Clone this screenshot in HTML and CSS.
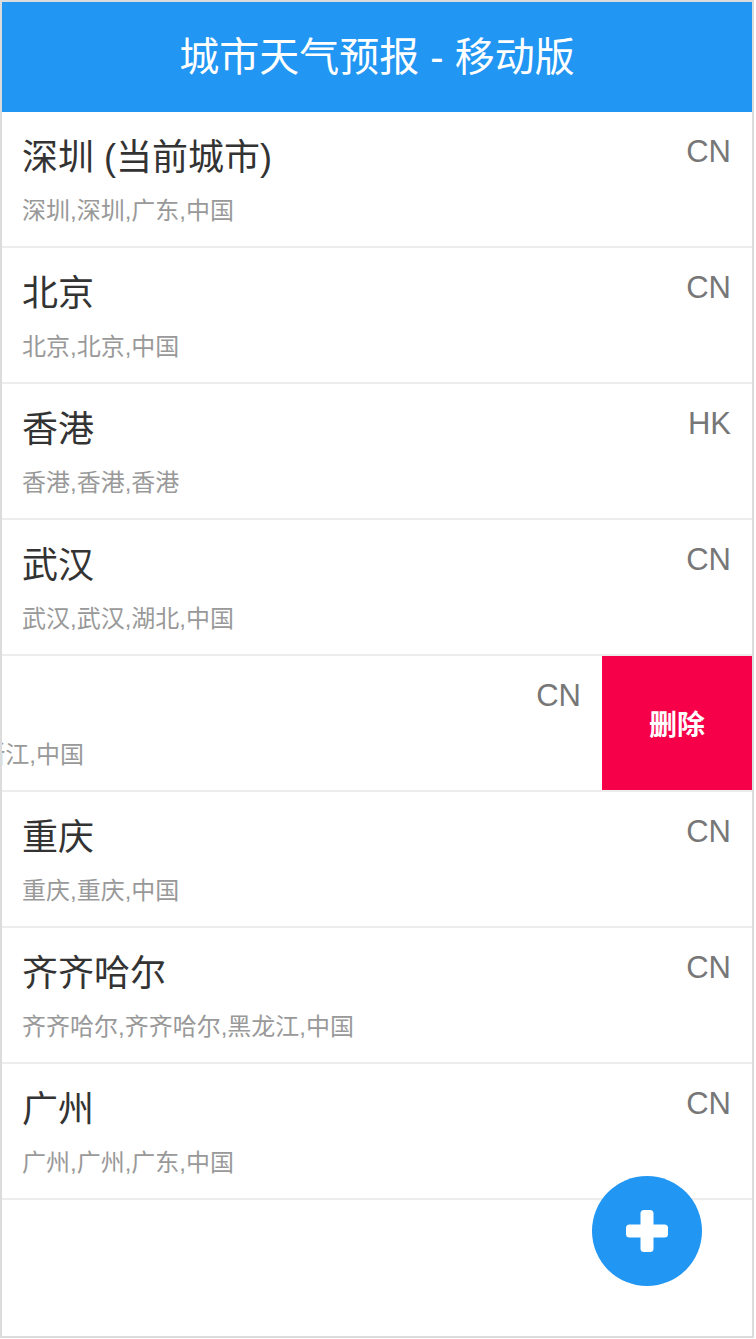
FILE: index.html
```html
<!DOCTYPE html>
<html lang="zh-CN">
<head>
<meta charset="utf-8">
<title>城市天气预报 - 移动版</title>
<link rel="stylesheet" href="styles.css">
</head>
<body>
<div class="phone">
  <header class="app-header">
    <h1 class="app-title">城市天气预报 - 移动版</h1>
  </header>
  <ul class="city-list">
    <li class="city-item">
      <div class="city-track">
        <div class="city-content">
          <div class="city-text">
            <div class="city-name">深圳 (当前城市)</div>
            <div class="city-path">深圳,深圳,广东,中国</div>
          </div>
          <div class="city-code">CN</div>
        </div>
      </div>
    </li>
    <li class="city-item">
      <div class="city-track">
        <div class="city-content">
          <div class="city-text">
            <div class="city-name">北京</div>
            <div class="city-path">北京,北京,中国</div>
          </div>
          <div class="city-code">CN</div>
        </div>
      </div>
    </li>
    <li class="city-item">
      <div class="city-track">
        <div class="city-content">
          <div class="city-text">
            <div class="city-name">香港</div>
            <div class="city-path">香港,香港,香港</div>
          </div>
          <div class="city-code">HK</div>
        </div>
      </div>
    </li>
    <li class="city-item">
      <div class="city-track">
        <div class="city-content">
          <div class="city-text">
            <div class="city-name">武汉</div>
            <div class="city-path">武汉,武汉,湖北,中国</div>
          </div>
          <div class="city-code">CN</div>
        </div>
      </div>
    </li>
    <li class="city-item">
      <div class="city-track is-swiped">
        <div class="city-content">
          <div class="city-text">
            <div class="city-name">杭州</div>
            <div class="city-path">杭州,杭州,浙江,中国</div>
          </div>
          <div class="city-code">CN</div>
        </div>
        <button class="delete-btn" type="button">删除</button>
      </div>
    </li>
    <li class="city-item">
      <div class="city-track">
        <div class="city-content">
          <div class="city-text">
            <div class="city-name">重庆</div>
            <div class="city-path">重庆,重庆,中国</div>
          </div>
          <div class="city-code">CN</div>
        </div>
      </div>
    </li>
    <li class="city-item">
      <div class="city-track">
        <div class="city-content">
          <div class="city-text">
            <div class="city-name">齐齐哈尔</div>
            <div class="city-path">齐齐哈尔,齐齐哈尔,黑龙江,中国</div>
          </div>
          <div class="city-code">CN</div>
        </div>
      </div>
    </li>
    <li class="city-item">
      <div class="city-track">
        <div class="city-content">
          <div class="city-text">
            <div class="city-name">广州</div>
            <div class="city-path">广州,广州,广东,中国</div>
          </div>
          <div class="city-code">CN</div>
        </div>
      </div>
    </li>
  </ul>
  <button class="fab" type="button" aria-label="添加城市">
    <svg width="44" height="44" viewBox="0 0 44 44" aria-hidden="true">
      <rect x="15.5" y="1" width="13" height="42" rx="3.5" fill="#fff"/>
      <rect x="1" y="15.5" width="42" height="13" rx="3.5" fill="#fff"/>
    </svg>
  </button>
</div>
</body>
</html>
```

FILE: styles.css
```css
* {
  box-sizing: border-box;
}

html, body {
  margin: 0;
  padding: 0;
  background: #fff;
}

body {
  font-family: "Liberation Sans", "Noto Sans CJK SC", sans-serif;
}

.phone {
  position: relative;
  width: 754px;
  height: 1338px;
  border: 2px solid #dcdcdc;
  background: #fff;
  overflow: hidden;
}

.app-header {
  height: 110px;
  background: #2196f3;
  display: flex;
  align-items: center;
  justify-content: center;
}

.app-title {
  margin: 0;
  color: #fff;
  font-size: 40px;
  font-weight: normal;
  line-height: 1;
  letter-spacing: 0;
}

.city-list {
  list-style: none;
  margin: 0;
  padding: 0;
}

.city-item {
  height: 136px;
  border-bottom: 2px solid #ededed;
  overflow: hidden;
}

.city-track {
  display: flex;
  width: 900px;
  height: 100%;
}

.city-track.is-swiped {
  transform: translateX(-150px);
}

.city-content {
  flex: 0 0 750px;
  display: flex;
  justify-content: space-between;
  align-items: flex-start;
  padding: 24px 21px 0 20px;
}

.city-name {
  margin-top: 4px;
  font-size: 36px;
  line-height: 36px;
  color: #333;
}

.city-path {
  margin-top: 23px;
  font-size: 24px;
  line-height: 24px;
  color: #999;
}

.city-code {
  font-size: 31px;
  line-height: 31px;
  color: #777;
}

.delete-btn {
  flex: 0 0 150px;
  border: 0;
  margin: 0;
  padding: 0;
  background: #f6004a;
  color: #fff;
  font-family: "Liberation Sans", "Noto Sans CJK SC", sans-serif;
  font-size: 28px;
  font-weight: bold;
  display: flex;
  align-items: center;
  justify-content: center;
}

.fab {
  position: absolute;
  right: 50px;
  bottom: 50px;
  width: 110px;
  height: 110px;
  border-radius: 50%;
  border: 0;
  padding: 0;
  background: #2196f3;
  display: flex;
  align-items: center;
  justify-content: center;
}
```
